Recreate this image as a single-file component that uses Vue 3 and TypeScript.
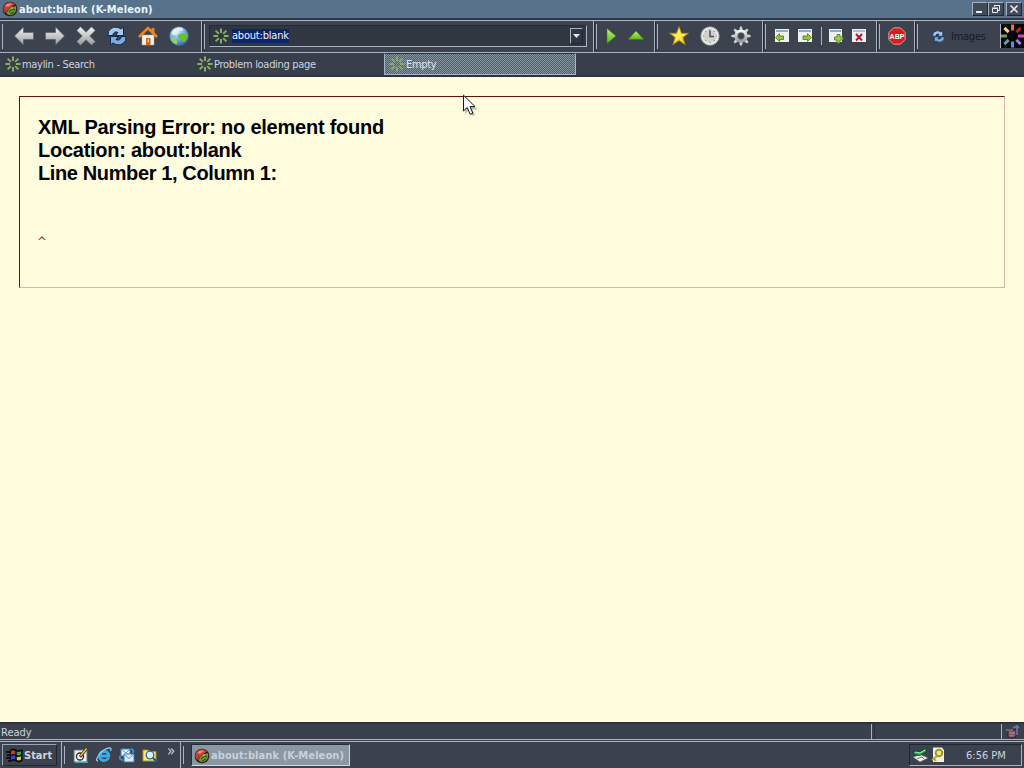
<script lang="ts" setup>
import { ref } from 'vue';

interface Tab {
    id: number;
    title: string;
}

const tabs: Tab[] = [
    { id: 1, title: 'maylin - Search' },
    { id: 2, title: 'Problem loading page' },
    { id: 3, title: 'Empty' },
];
const activeTab = ref(3);

const spokes = [0, 45, 90, 135, 180, 225, 270, 315];
const throbberColors = ['#e8742e', '#b82420', '#d83cc8', '#9a7ae8', '#3c9ce8', '#4ca89c', '#7c9c50', '#f0d480'];
</script>

<template>
    <div class="desktop">
        <!-- shared artwork -->
        <svg class="defs" width="0" height="0">
            <defs>
                <linearGradient id="metal" x1="0" y1="0" x2="0" y2="1">
                    <stop offset="0" stop-color="#f4f4f4" />
                    <stop offset="1" stop-color="#989a9c" />
                </linearGradient>
                <linearGradient id="lime" x1="0" y1="0" x2="0" y2="1">
                    <stop offset="0" stop-color="#c4f070" />
                    <stop offset="1" stop-color="#55b818" />
                </linearGradient>
                <radialGradient id="sky" cx=".4" cy=".3" r=".75">
                    <stop offset="0" stop-color="#d8efff" />
                    <stop offset=".5" stop-color="#74b0e4" />
                    <stop offset="1" stop-color="#2c62b4" />
                </radialGradient>
                <symbol id="spinner" viewBox="0 0 16 16">
                    <path
                        v-for="a in spokes" :key="a" d="M8 0.4V5" stroke="#86ad68" stroke-width="2"
                        :transform="`rotate(${a} 8 8)`"
                    />
                </symbol>
                <symbol id="kmeleon" viewBox="0 0 16 16">
                    <circle cx="8" cy="8" r="7.3" fill="#30150f" />
                    <path d="M1.3 8A6.7 6.7 0 0 1 13 3.5L8 7L3 12Q1.3 10 1.3 8Z" fill="#c04038" />
                    <path d="M3 5Q6 1 10 3L6 6Z" fill="#e8887c" />
                    <path d="M4 12L8 7L14 5Q15.5 12 9 14.3Q6 14.4 4 12Z" fill="#6b9632" />
                    <path d="M7 11L11 8L13 9M8 13L12 11" stroke="#27420f" fill="none" />
                    <path d="M9 7H11" stroke="#d2de73" />
                </symbol>
                <symbol id="reload" viewBox="0 0 20 20">
                    <path d="M1 9.5Q.5 5 4 2.5Q9 -.5 14 3L16.5 1V9.5H8.5L11 6.5Q7 4.5 5.5 9.5Z" fill="#a4c8ee" stroke="#10284c" stroke-width="1" />
                    <path d="M19 10.5Q19.5 15 16 17.5Q11 20.5 6 17L3.5 19V10.5H11.5L9 13.5Q13 15.5 14.5 10.5Z" fill="#7cabe0" stroke="#10284c" stroke-width="1" />
                </symbol>
            </defs>
        </svg>

        <header class="titlebar">
            <svg class="app-icon" width="16" height="16"><use href="#kmeleon" /></svg>
            <span class="window-title">about:blank (K-Meleon)</span>
            <div class="window-buttons">
                <button><svg width="12" height="10"><path d="M2 8H8" stroke="#e4eaf0" stroke-width="2" /></svg></button>
                <button>
                    <svg width="12" height="10">
                        <path d="M4.5 3V1.5H9.5V6.5H8M4 1.5H10" stroke="#e4eaf0" fill="none" />
                        <path d="M2.5 4.5H7.5V8.5H2.5ZM2 4H8" stroke="#e4eaf0" fill="none" />
                    </svg>
                </button>
                <button class="close"><svg width="12" height="10"><path d="M2.5 1.5L9.5 8.5M9.5 1.5L2.5 8.5" stroke="#e4eaf0" stroke-width="1.6" /></svg></button>
            </div>
        </header>

        <nav class="toolbar">
            <div class="band nav-band">
                <svg width="20" height="20" viewBox="0 0 20 20"><path d="M.5 10L9.5 1V6.5H19.5V13.5H9.5V19Z" fill="url(#metal)" stroke="#55595e" stroke-width=".6" /></svg>
                <svg width="20" height="20" viewBox="0 0 20 20"><path d="M19.5 10L10.5 1V6.5H.5V13.5H10.5V19Z" fill="url(#metal)" stroke="#55595e" stroke-width=".6" /></svg>
                <svg width="20" height="20" viewBox="0 0 20 20"><path d="M4.5 .8L10 6.3L15.5 .8L19.2 4.5L13.7 10L19.2 15.5L15.5 19.2L10 13.7L4.5 19.2L.8 15.5L6.3 10L.8 4.5Z" fill="url(#metal)" stroke="#66696d" stroke-width=".5" /></svg>
                <svg width="20" height="20"><use href="#reload" /></svg>
                <svg width="20" height="20" viewBox="0 0 20 20">
                    <path d="M4 9H16V19H4Z" fill="#f3f0ea" stroke="#b8a88c" stroke-width=".5" />
                    <path d="M13.5 2H16.5V7H13.5Z" fill="#eb8427" />
                    <path d="M1 11L10 2L19 11" fill="none" stroke="#ef8620" stroke-width="2.6" />
                    <path d="M8 12H12.5V19H8Z" fill="#d6681c" />
                    <path d="M9.5 13.5H11V16H9.5Z" fill="#f8cd92" />
                </svg>
                <svg width="20" height="20" viewBox="0 0 20 20">
                    <circle cx="10" cy="10" r="9.3" fill="url(#sky)" stroke="#5e86ae" stroke-width=".5" />
                    <path d="M2.5 6Q6 1 12 1.5Q15 2.5 14 4.5L9 5.5L6 9Q2 9.5 2.5 6Z" fill="#e4f4f4" opacity=".9" />
                    <path d="M9 9Q13 6.5 18.6 8.5Q19 13 15 16Q12 16 12 13L9 12Z" fill="#6cc030" />
                    <path d="M1.3 12Q4 11 6.5 12.5Q9 15 8 18.5Q3 17.5 1.3 12Z" fill="#94d068" />
                </svg>
            </div>

            <div class="band address-band">
                <div class="address">
                    <svg width="16" height="16"><use href="#spinner" /></svg>
                    <span class="url">about:blank</span>
                    <button class="dropdown"><svg width="7" height="4"><path d="M0 0H7L3.5 4Z" fill="#e7ebf2" /></svg></button>
                </div>
            </div>

            <div class="band go-band">
                <svg width="20" height="20" viewBox="0 0 20 20"><path d="M6 2.5L15 10L6 17.5Z" fill="url(#lime)" stroke="#327b0d" stroke-width=".5" /></svg>
                <svg width="20" height="20" viewBox="0 0 20 20"><path d="M2 13.5L10 5L18 13.5Z" fill="url(#lime)" stroke="#327b0d" stroke-width=".5" /></svg>
            </div>

            <div class="band fav-band">
                <svg width="20" height="20" viewBox="0 0 20 20">
                    <path d="M10 .5L12.6 7.2H19.5L14 11.6L16.2 18.8L10 14.6L3.8 18.8L6 11.6L.5 7.2H7.4Z" fill="#f7ce24" stroke="#ad7f0c" stroke-width=".7" />
                    <path d="M10 2.5L11.8 8H17L12 11L13 15L10 13L5.5 16L7.3 11L3 8.3H8.3Z" fill="#fdec5c" />
                </svg>
                <svg width="20" height="20" viewBox="0 0 20 20">
                    <circle cx="10" cy="10" r="9.2" fill="#e4e4e1" stroke="#a5a6a6" stroke-width=".8" />
                    <circle cx="10" cy="10" r="7.2" fill="#d0d0cd" stroke="#f5f5f5" stroke-width=".8" />
                    <path d="M10 4.5V10.5H14" fill="none" stroke="#4c4d4f" stroke-width="1.5" />
                    <path d="M10 3V4M10 16V17M3 10H4M16 10H17M5 5L6 6M15 5L14 6M5 15L6 14M15 15L14 14" stroke="#828282" />
                </svg>
                <svg width="20" height="20" viewBox="0 0 20 20">
                    <path v-for="a in spokes" :key="a" d="M8.2 4.8L9 .4H11L11.8 4.8Z" fill="#cfd1d3" :transform="`rotate(${a} 10 10)`" />
                    <circle cx="10" cy="10" r="5" fill="none" stroke="url(#metal)" stroke-width="3.2" />
                    <circle cx="10" cy="10" r="3.3" fill="none" stroke="#777c82" stroke-width=".6" />
                </svg>
            </div>

            <div class="band tabs-band">
                <svg width="16" height="16" viewBox="0 0 16 16">
                    <path d="M1 1H15V14H1Z" fill="#eff1f1" /><path d="M2 3H14" stroke="#8fabca" stroke-width="2" />
                    <path d="M1.5 9.5L5.5 5.7V8H9.5V11.5H5.5V13.5Z" fill="#91c93e" stroke="#4b741d" stroke-width=".8" />
                </svg>
                <svg width="16" height="16" viewBox="0 0 16 16">
                    <path d="M1 1H15V14H1Z" fill="#eff1f1" /><path d="M2 3H14" stroke="#8fabca" stroke-width="2" />
                    <path d="M14.5 9.5L10.5 5.7V8H6V11.5H10.5V13.5Z" fill="#91c93e" stroke="#4b741d" stroke-width=".8" />
                </svg>
                <i class="divider"></i>
                <svg width="16" height="16" viewBox="0 0 16 16">
                    <path d="M1 1H14V14H1Z" fill="#eff1f1" /><path d="M2 3H13" stroke="#8fabca" stroke-width="2" />
                    <path d="M9 6.5H12V9H15V12H12V15H9V12H6.5V9H9Z" fill="#9bd044" stroke="#4b741d" stroke-width=".8" />
                </svg>
                <svg width="16" height="16" viewBox="0 0 16 16">
                    <path d="M1 1H15V14H1Z" fill="#eff1f1" /><path d="M2 3H14" stroke="#9aacc4" stroke-width="1.5" />
                    <path d="M5 6L11 12.5M11 6L5 12.5" stroke="#b31922" stroke-width="1.9" />
                </svg>
            </div>

            <div class="band abp-band">
                <svg width="18" height="18" viewBox="0 0 18 18">
                    <path d="M5.5 .8H12.5L17.2 5.5V12.5L12.5 17.2H5.5L.8 12.5V5.5Z" fill="#d71d20" stroke="#efa5a5" stroke-width=".9" />
                    <text x="9" y="11.8" text-anchor="middle" class="abp">ABP</text>
                </svg>
            </div>

            <div class="band images-band">
                <svg width="13" height="13"><use href="#reload" /></svg>
                <span>Images</span>
            </div>

            <div class="throbber">
                <svg width="23" height="24" viewBox="0 0 23 24">
                    <path
                        v-for="(c, i) in throbberColors" :key="c" d="M11.5 .5V6.5" :stroke="c" stroke-width="3"
                        :transform="`rotate(${i * 45} 11.5 12)`"
                    />
                </svg>
            </div>
        </nav>

        <div class="tabbar">
            <div v-for="tab in tabs" :key="tab.id" class="tab" :class="{ active: tab.id === activeTab }" @click="activeTab = tab.id">
                <svg width="16" height="16"><use href="#spinner" /></svg>
                <span>{{ tab.title }}</span>
            </div>
        </div>

        <main class="page">
            <section class="parse-error">
                <div class="reason">XML Parsing Error: no element found</div>
                <div class="location">Location: about:blank</div>
                <div class="line-number">Line Number 1, Column 1:</div>
                <pre class="source-text">^</pre>
            </section>
        </main>

        <div class="statusbar">
            <div class="status-text">Ready</div>
            <div class="status-cell"></div>
            <div class="status-icon">
                <svg width="16" height="15" viewBox="0 0 16 15">
                    <path d="M3 6H11V13H3Z" fill="#7d5a6a" stroke="#1f2230" />
                    <path d="M1 6H8M4 9H10M4 12H9" stroke="#ce8580" />
                    <path d="M8 4L12 2L14 4M12 3V11" fill="none" stroke="#7474bc" stroke-width="1.5" />
                </svg>
            </div>
        </div>

        <footer class="taskbar">
            <button class="start">
                <svg width="17" height="15" viewBox="0 0 17 15">
                    <path d="M4 2Q7 -.5 10 1.5Q13 3 16.5 1V13Q13 15.5 10 13.5Q7 12 4 14Z" fill="#0b0b10" />
                    <path d="M0 4H4M1 7H4M0 10H4M2 13H4" stroke="#101016" stroke-width="1.8" />
                    <path d="M1 5.5H3" stroke="#b03028" /><path d="M1 11.5H3" stroke="#2c44b0" />
                    <path d="M5 3Q7 1.5 9.3 3V6.5Q7 5.5 5 6.8Z" fill="#c8392c" />
                    <path d="M10.8 3.5Q13 4.5 15 3V6.5Q13 8 10.8 7Z" fill="#49a246" />
                    <path d="M5 8.3Q7 7 9.3 8V11.5Q7 10.5 5 12Z" fill="#3048d8" />
                    <path d="M10.8 8.7Q13 9.5 15 8.2V11.5Q13 13 10.8 12Z" fill="#e3cc35" />
                </svg>
                <span>Start</span>
            </button>
            <div class="quick-launch">
                <svg width="16" height="16" viewBox="0 0 16 16">
                    <path d="M1 3H14V15H1Z" fill="#f0efde" stroke="#547a87" /><path d="M2 15.4H15" stroke="#48a9bd" />
                    <circle cx="7" cy="9.5" r="3.5" fill="#fff" stroke="#252a2d" stroke-width="1.3" />
                    <path d="M7 10L13.5 1.5" stroke="#5b3020" stroke-width="3" /><path d="M7.5 9L13.5 1.5" stroke="#f0bb48" stroke-width="1.4" />
                </svg>
                <svg width="16" height="16" viewBox="0 0 16 16">
                    <path d="M12.8 11Q10.5 14 7.5 13.5Q3.5 13 3.5 8.8Q4 4.5 8.2 4.3Q12.8 4.5 12.8 9H5" fill="none" stroke="#3fa7ea" stroke-width="2.8" />
                    <path d="M2 14Q-1 14 2.5 8.5Q7 2 13 1Q16 .5 14.5 4" fill="none" stroke="#83cef6" stroke-width="1.3" />
                </svg>
                <svg width="16" height="16" viewBox="0 0 16 16">
                    <path d="M2 2H11V9H2Z" fill="#e4f2fb" stroke="#4584c0" /><path d="M5 7H15V15H5Z" fill="#dcecf8" stroke="#397abc" />
                    <path d="M5 7L10 11.5L15 7M2 2L7 6L11 2" fill="none" stroke="#5b9bd2" />
                    <path d="M12 2Q15 2 14 6M1 9Q0 13 4 13" fill="none" stroke="#3d8be0" stroke-width="2" />
                </svg>
                <svg width="16" height="16" viewBox="0 0 16 16">
                    <path d="M1 3H6L7.5 4.5H14V14H1Z" fill="#f5e885" stroke="#a79531" />
                    <circle cx="8" cy="8" r="3.8" fill="#d8f2f7" stroke="#3c6595" stroke-width="1.3" />
                    <path d="M10.8 10.8L15 15" stroke="#2851a0" stroke-width="2" />
                </svg>
                <span class="more">»</span>
            </div>
            <div class="task-list">
                <button class="task">
                    <svg width="16" height="16"><use href="#kmeleon" /></svg>
                    <span>about:blank (K-Meleon)</span>
                </button>
            </div>
            <div class="tray">
                <svg width="17" height="16" viewBox="0 0 17 16">
                    <path d="M1 10L9 7.5L16 11L8 15Z" fill="#eceeea" stroke="#5b6266" stroke-width=".6" />
                    <path d="M5 11.5L10 10L12 12" fill="none" stroke="#727a7b" />
                    <path d="M1 4L7 5L14.5 1V4.5L8 8.5L2 7.5Z" fill="#2dac4e" stroke="#0c3b1b" stroke-width=".8" />
                    <path d="M3 5L8 6L13 3" fill="none" stroke="#a4e8b0" />
                </svg>
                <svg width="14" height="16" viewBox="0 0 14 16">
                    <path d="M2 .5H11L13 3V15H2Z" fill="#f1f0df" />
                    <circle cx="8" cy="6" r="3.3" fill="#eee778" stroke="#96911d" stroke-width="1.8" />
                    <path d="M6 9L1 13M3 11.5L5 14" stroke="#b0a922" stroke-width="1.8" />
                </svg>
                <span class="clock">6:56 PM</span>
            </div>
        </footer>

        <!-- mouse pointer, lies over the page -->
        <svg class="pointer" width="18" height="24" viewBox="0 0 18 24">
            <path d="M3 3V20L7 16L10 22L13 21L10.5 15.5H15.5Z" fill="#000" opacity=".25" />
            <path d="M1.5 1.2V17L5.2 13.5L8.2 20.3L10.8 19.2L8 12.6H13Z" fill="#fff" stroke="#151515" stroke-width="1" />
        </svg>
    </div>
</template>

<style>
body {
    margin: 0;
    overflow: hidden;
}
</style>

<style scoped>
* {
    box-sizing: border-box;
}

.desktop {
    width: 1024px;
    height: 768px;
    position: relative;
    display: flex;
    flex-direction: column;
    font-family: "DejaVu Sans Condensed", "DejaVu Sans", sans-serif;
    font-stretch: condensed;
    font-size: 11px;
    color: #ccd4df;
    background: #3a414c;
    white-space: nowrap;
}

svg {
    display: block;
    flex: none;
}

.defs {
    position: absolute;
}

button {
    padding: 0;
    margin: 0;
    border: 0;
    background: none;
    font: inherit;
    color: inherit;
}

.titlebar {
    height: 20px;
    flex: none;
    display: flex;
    align-items: center;
    padding: 0 2px;
    background: #58728c;
    border-bottom: 2px solid #2c3645;
    color: #eaf4fc;
    font-weight: bold;
}

.window-title {
    margin-left: 1px;
    padding-top: 1px;
    letter-spacing: 0.13px;
}

.window-buttons {
    display: flex;
    margin-left: auto;
}

.window-buttons button {
    width: 16px;
    height: 14px;
    display: flex;
    align-items: center;
    justify-content: center;
    background: #414b58;
    border: 1px solid;
    border-color: #a4b2c1 #202730 #202730 #a4b2c1;
}

.window-buttons .close {
    margin-left: 2px;
}

.toolbar {
    height: 33px;
    flex: none;
    display: flex;
    border-top: 1px solid #a8b4c2;
    border-bottom: 1px solid #a8b4c2;
    background: #3c434f;
}

.band {
    display: flex;
    align-items: center;
    padding-bottom: 1px;
    border-left: 1px solid #a8b4c2;
    box-shadow: inset 1px 0 #262c35;
}

/* gripper */
.band::before {
    content: '';
    align-self: stretch;
    width: 1px;
    margin: 3px 0 2px 2px;
    background: #a8b4c2;
    flex: none;
}

.nav-band {
    width: 201px;
    gap: 11px;
    border-left-color: #3c434f;
    box-shadow: none;
}

.nav-band::before {
    margin-left: 1px;
}

.address-band {
    width: 392px;
}

.address {
    width: 378px;
    height: 22px;
    margin-left: 4px;
    padding: 0 3px;
    display: flex;
    align-items: center;
    background: #303740;
    border: 1px solid;
    border-color: #262c34 #a8b4c2 #a8b4c2 #262c34;
}

.url {
    height: 14px;
    line-height: 14px;
    margin-left: 3px;
    background: #0c2468;
    color: #f0f4fa;
    letter-spacing: -0.2px;
}

.dropdown {
    width: 13px;
    height: 16px;
    margin-left: auto;
    display: flex;
    align-items: center;
    justify-content: center;
    border: 1px solid;
    border-color: #a8b4c2 #20262f #20262f #a8b4c2;
}

.go-band {
    width: 61px;
    gap: 5px;
}

.go-band::before {
    margin-right: -1px;
}

.fav-band {
    width: 108px;
    gap: 11px;
}

.tabs-band {
    width: 114px;
    gap: 7px;
}

.tabs-band::before {
    margin-right: 1px;
}

.divider {
    width: 1px;
    height: 18px;
    margin-left: 1px;
    margin-right: -1px;
    background: #a8b4c2;
}

.abp-band {
    width: 38px;
    gap: 8px;
}

.abp {
    font: bold 7px "Liberation Sans", sans-serif;
    fill: #fff;
}

.images-band {
    width: 86px;
    color: #161b23;
}

.images-band svg {
    margin: 0 6px 0 14px;
}

.images-band span {
    letter-spacing: -0.25px;
}

.throbber {
    width: 24px;
    height: 24px;
    margin-top: 3px;
    background: #050506;
    border-left: 1px solid #a8b4c2;
}

.tabbar {
    height: 24px;
    flex: none;
    display: flex;
    background: #393f4a;
    border-bottom: 2px solid #2e333d;
}

.tab {
    width: 192px;
    height: 22px;
    padding-left: 5px;
    display: flex;
    align-items: center;
    gap: 1px;
    letter-spacing: -0.3px;
}

.tab.active {
    padding-left: 4px;
    border: 1px solid;
    border-color: #2a303a #a8b4c2 #a8b4c2 #a8b4c2;
    background: repeating-conic-gradient(#85939e 0 25%, #525e6a 0 50%) 0 0 / 2px 2px;
    color: #dce5ec;
}

.page {
    flex: 1;
    padding: 19px;
    background: #fffddd;
}

.parse-error {
    width: 986px;
    height: 192px;
    padding: 19px 18px;
    border: 1px solid;
    border-color: #66120c #d9b69d #d9b69d #66120c;
    font: bold 20px/23px "Liberation Sans", Arial, sans-serif;
    color: #000;
}

.reason {
    letter-spacing: -0.23px;
}

.location {
    letter-spacing: -0.26px;
}

.line-number {
    letter-spacing: -0.38px;
}

.source-text {
    margin: 49px 0 0;
    font: 13px/16px "DejaVu Sans Mono", monospace;
    color: #992820;
}

.statusbar {
    height: 18px;
    flex: none;
    display: flex;
    line-height: 17px;
    border-top: 2px solid #2e343e;
    border-bottom: 1px solid #a8b4c2;
}

.status-text {
    width: 872px;
    padding-left: 1px;
    border-right: 1px solid #a8b4c2;
}

.status-cell {
    width: 128px;
    margin-left: 2px;
    border-left: 1px solid #282e38;
    border-right: 1px solid #a8b4c2;
}

.status-icon {
    padding-left: 3px;
}

.taskbar {
    height: 27px;
    flex: none;
    display: flex;
    align-items: center;
    margin-top: 1px;
    border-top: 1px solid #a8b4c2;
    background: #3b424d;
}

.start {
    width: 55px;
    height: 22px;
    margin-left: 2px;
    display: flex;
    align-items: center;
    gap: 1px;
    padding-left: 3px;
    border: 1px solid;
    border-color: #98a5b4 #20262f #20262f #98a5b4;
    font-weight: bold;
}

.quick-launch,
.task-list {
    display: flex;
    align-items: center;
    align-self: stretch;
    border-left: 1px solid #a8b4c2;
}

.quick-launch::before,
.task-list::before {
    content: '';
    width: 1px;
    height: 18px;
    margin-left: 2px;
    background: #a8b4c2;
}

.quick-launch {
    width: 119px;
    margin-left: 4px;
    gap: 7px;
}

.quick-launch::before {
    margin-right: 1px;
}

.more {
    margin: -8px 0 0 2px;
    font-size: 15px;
}

.task-list {
    flex: 1;
}

.task {
    width: 159px;
    height: 22px;
    margin-left: 7px;
    padding: 1px 0 0 2px;
    display: flex;
    align-items: center;
    gap: 1px;
    background: #8b98a3;
    border: 1px solid;
    border-color: #262c36 #d0d8e0 #d0d8e0 #262c36;
    color: #c6d1da;
    font-weight: bold;
    letter-spacing: 0.1px;
}

.tray {
    width: 113px;
    height: 22px;
    margin-right: 2px;
    padding-left: 2px;
    display: flex;
    align-items: center;
    gap: 2px;
    border: 1px solid;
    border-color: #20262f #a8b4c2 #a8b4c2 #20262f;
}

.clock {
    margin-left: 19px;
    padding-top: 1px;
}

.pointer {
    position: absolute;
    left: 462px;
    top: 94px;
}
</style>
